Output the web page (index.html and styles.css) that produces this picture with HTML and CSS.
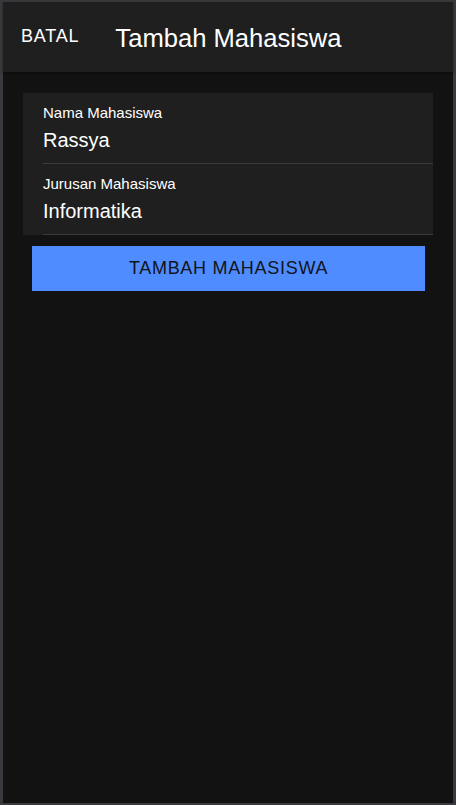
FILE: index.html
```html
<!DOCTYPE html>
<html lang="id">
<head>
<meta charset="utf-8">
<title>Tambah Mahasiswa</title>
<link rel="stylesheet" href="styles.css">
</head>
<body>
<div class="frame">
  <header class="toolbar">
    <button class="cancel">BATAL</button>
    <h1 class="title">Tambah Mahasiswa</h1>
  </header>
  <main class="content">
    <div class="card">
      <label class="item">
        <span class="label">Nama Mahasiswa</span>
        <span class="value">Rassya</span>
      </label>
      <label class="item">
        <span class="label">Jurusan Mahasiswa</span>
        <span class="value">Informatika</span>
      </label>
    </div>
    <button class="submit">TAMBAH MAHASISWA</button>
  </main>
</div>
</body>
</html>
```

FILE: styles.css
```css
html, body {
  margin: 0;
  padding: 0;
  height: 100%;
  background: #3c3c40;
}
body {
  font-family: "Liberation Sans", Arial, sans-serif;
  color: #ffffff;
}
.frame {
  box-sizing: border-box;
  height: 805px;
  width: 456px;
  border-style: solid;
  border-color: #3a3a3e;
  border-width: 2px 3px 2px 3px;
  background: #121212;
  display: flex;
  flex-direction: column;
}
.toolbar {
  height: 70px;
  background: #1f1f1f;
  display: flex;
  align-items: center;
  box-shadow: 0 1px 3px rgba(0,0,0,0.4);
}
.cancel {
  background: none;
  border: 0;
  color: #ffffff;
  font-family: inherit;
  font-size: 18px;
  letter-spacing: 0.8px;
  padding: 0;
  margin: 0 0 2px 18px;
  line-height: 20px;
}
.title {
  margin: 2px 0 0 36px;
  font-size: 25.6px;
  font-weight: normal;
  line-height: 30px;
}
.content {
  padding: 21px 20px 0 20px;
  display: flex;
  flex-direction: column;
}
.card {
  background: #1f1f1f;
  display: flex;
  flex-direction: column;
}
.item {
  display: flex;
  flex-direction: column;
  margin-left: 20px;
  padding: 11px 0 11px 0;
  border-bottom: 1px solid #3a3a3a;
}
.label {
  font-size: 15px;
  line-height: 18px;
  margin-bottom: 6px;
}
.value {
  font-size: 20px;
  line-height: 24px;
}
.submit {
  margin: 11px 8px 0 9px;
  height: 45px;
  border: 0;
  background: #4f8cff;
  color: #111418;
  font-family: inherit;
  font-size: 18px;
  letter-spacing: 0.7px;
  padding: 0;
}
```
